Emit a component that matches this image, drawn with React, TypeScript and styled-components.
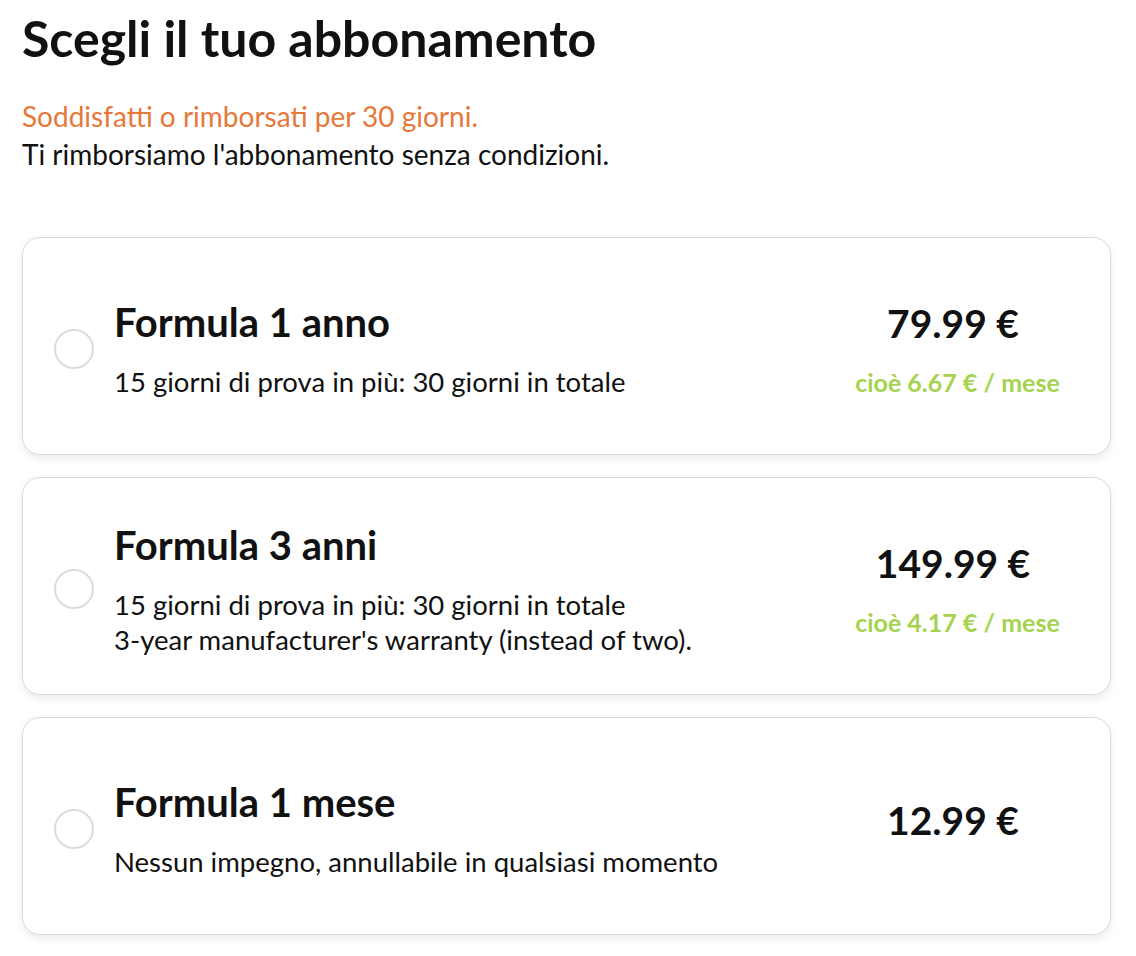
import React from "react";
import styled, { createGlobalStyle } from "styled-components";

const Global = createGlobalStyle`
  html, body { margin: 0; padding: 0; background: #fff; }
  body { font-family: Lato, "Noto Sans", sans-serif; color: #111; }
`;

const Page = styled.div`
  padding: 8px 25px 20px 22px;
`;

const Title = styled.h1`
  margin: 0;
  font-size: 50px;
  font-weight: 700;
  line-height: 60px;
  color: #111;
`;

const Intro = styled.div`
  margin-top: 29px;
  font-size: 28px;
  line-height: 38px;
`;

const Guarantee = styled.div`
  color: #e8773a;
`;

const Plain = styled.div`
  color: #111;
`;

const Plans = styled.div`
  margin-top: 64px;
  display: flex;
  flex-direction: column;
  gap: 22px;
`;

const Card = styled.label`
  display: flex;
  align-items: center;
  min-height: 218px;
  box-sizing: border-box;
  border: 1px solid #dadada;
  border-radius: 18px;
  background: #fff;
  box-shadow: 0 4px 9px rgba(0, 0, 0, 0.08);
  padding: 5px 30px 0 31px;
  cursor: pointer;
`;

const Radio = styled.span`
  flex: 0 0 auto;
  width: 40px;
  height: 40px;
  box-sizing: border-box;
  border: 2px solid #dcdcdc;
  border-radius: 50%;
  margin-right: 20px;
`;

const Info = styled.div`
  flex: 1 1 auto;
  display: flex;
  flex-direction: column;
`;

const PlanName = styled.div`
  font-size: 40px;
  font-weight: 700;
  line-height: 48px;
  margin-bottom: 18px;
`;

const Desc = styled.div`
  font-size: 27.5px;
  line-height: 35px;
`;

const PriceCol = styled.div`
  flex: 0 0 250px;
  display: flex;
  flex-direction: column;
  align-items: center;
  text-align: center;
`;

const Price = styled.div`
  font-size: 39px;
  font-weight: 700;
  line-height: 48px;
  margin-right: 4px;
`;

const Monthly = styled.div`
  margin-top: 18px;
  margin-left: 5px;
  font-size: 25px;
  font-weight: 700;
  line-height: 34px;
  color: #a5d34f;
`;

type Plan = {
  name: string;
  desc: string[];
  price: string;
  monthly?: string;
};

const plans: Plan[] = [
  {
    name: "Formula 1 anno",
    desc: ["15 giorni di prova in più: 30 giorni in totale"],
    price: "79.99 €",
    monthly: "cioè 6.67 € / mese",
  },
  {
    name: "Formula 3 anni",
    desc: [
      "15 giorni di prova in più: 30 giorni in totale",
      "3-year manufacturer's warranty (instead of two).",
    ],
    price: "149.99 €",
    monthly: "cioè 4.17 € / mese",
  },
  {
    name: "Formula 1 mese",
    desc: ["Nessun impegno, annullabile in qualsiasi momento"],
    price: "12.99 €",
  },
];

export default function App() {
  return (
    <>
      <Global />
      <Page>
        <Title>Scegli il tuo abbonamento</Title>
        <Intro>
          <Guarantee>Soddisfatti o rimborsati per 30 giorni.</Guarantee>
          <Plain>Ti rimborsiamo l'abbonamento senza condizioni.</Plain>
        </Intro>
        <Plans>
          {plans.map((p) => (
            <Card key={p.name}>
              <Radio />
              <Info>
                <PlanName>{p.name}</PlanName>
                {p.desc.map((d) => (
                  <Desc key={d}>{d}</Desc>
                ))}
              </Info>
              <PriceCol>
                <Price>{p.price}</Price>
                <Monthly>{p.monthly ?? ""}</Monthly>
              </PriceCol>
            </Card>
          ))}
        </Plans>
      </Page>
    </>
  );
}
